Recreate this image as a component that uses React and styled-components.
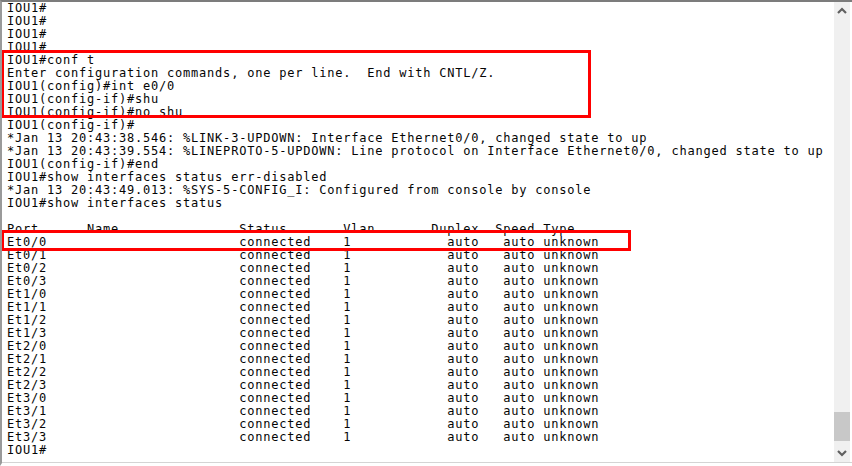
import React from 'react';
import styled, { createGlobalStyle } from 'styled-components';

const GlobalStyle = createGlobalStyle`
  html, body {
    margin: 0;
    padding: 0;
    background: #ffffff;
  }
`;

const lines = [
  'IOU1#',
  'IOU1#',
  'IOU1#',
  'IOU1#',
  'IOU1#conf t',
  'Enter configuration commands, one per line.  End with CNTL/Z.',
  'IOU1(config)#int e0/0',
  'IOU1(config-if)#shu',
  'IOU1(config-if)#no shu',
  'IOU1(config-if)#',
  '*Jan 13 20:43:38.546: %LINK-3-UPDOWN: Interface Ethernet0/0, changed state to up',
  '*Jan 13 20:43:39.554: %LINEPROTO-5-UPDOWN: Line protocol on Interface Ethernet0/0, changed state to up',
  'IOU1(config-if)#end',
  'IOU1#show interfaces status err-disabled',
  '*Jan 13 20:43:49.013: %SYS-5-CONFIG_I: Configured from console by console',
  'IOU1#show interfaces status',
  '',
  'Port      Name               Status       Vlan       Duplex  Speed Type',
];

const ports = [
  'Et0/0', 'Et0/1', 'Et0/2', 'Et0/3',
  'Et1/0', 'Et1/1', 'Et1/2', 'Et1/3',
  'Et2/0', 'Et2/1', 'Et2/2', 'Et2/3',
  'Et3/0', 'Et3/1', 'Et3/2', 'Et3/3',
];

// port row laid out like the IOS table: fixed columns
const portRow = (p) =>
  p.padEnd(29, ' ') + 'connected'.padEnd(13, ' ') + '1'.padEnd(13, ' ') + 'auto   auto unknown';

const allLines = [...lines, ...ports.map(portRow), 'IOU1#'];

const App = () => {
  return (
    <>
      <GlobalStyle />
      <Window>
        <Terminal>
          {allLines.map((l, i) => (
            <Line key={i}>{l === '' ? ' ' : l}</Line>
          ))}
          <Mark $left={1} $top={50} $width={590} $height={68} />
          <Mark $left={1} $top={230} $width={630} $height={21} />
        </Terminal>
        <Scrollbar>
          <Arrow>
            <svg width="10" height="7" viewBox="0 0 10 7">
              <path d="M1 6 L5 2 L9 6" fill="none" stroke="#606060" strokeWidth="2.2" />
            </svg>
          </Arrow>
          <Track>
            <Thumb />
          </Track>
          <Arrow>
            <svg width="10" height="7" viewBox="0 0 10 7">
              <path d="M1 1 L5 5 L9 1" fill="none" stroke="#606060" strokeWidth="2.2" />
            </svg>
          </Arrow>
        </Scrollbar>
      </Window>
    </>
  );
};

const Window = styled.div`
  width: 852px;
  height: 466px;
  box-sizing: border-box;
  display: flex;
  background: #ffffff;
  border-top: 2px solid #7c7c7c;
  border-left: 2px solid #9a9a9a;
  border-bottom: 3px solid #ffffff;
  box-shadow: inset 0 -1px 0 #d4d4d4;
  overflow: hidden;
`;

const Terminal = styled.div`
  position: relative;
  flex: 1;
  padding: 0 0 0 5px;
  box-sizing: border-box;
  font-family: "DejaVu Sans Mono", "Liberation Mono", monospace;
  font-size: 12px;
  letter-spacing: 0.78px;
  line-height: 13px;
  color: #050505;
`;

const Line = styled.div`
  white-space: pre;
  height: 13px;
`;

const Mark = styled.div`
  position: absolute;
  left: ${(p) => p.$left - 2}px;
  top: ${(p) => p.$top - 2}px;
  width: ${(p) => p.$width}px;
  height: ${(p) => p.$height}px;
  box-sizing: border-box;
  border: 3px solid #ff0000;
`;

const Scrollbar = styled.div`
  width: 16px;
  margin-right: 2px;
  margin-bottom: 1px;
  background: #f0f0f0;
  display: flex;
  flex-direction: column;
`;

const Arrow = styled.div`
  height: 17px;
  display: flex;
  align-items: center;
  justify-content: center;
`;

const Track = styled.div`
  flex: 1;
  display: flex;
  flex-direction: column;
  justify-content: flex-end;
`;

const Thumb = styled.div`
  height: 29px;
  margin-bottom: 4px;
  background: #c8c8c8;
`;

export default App;
